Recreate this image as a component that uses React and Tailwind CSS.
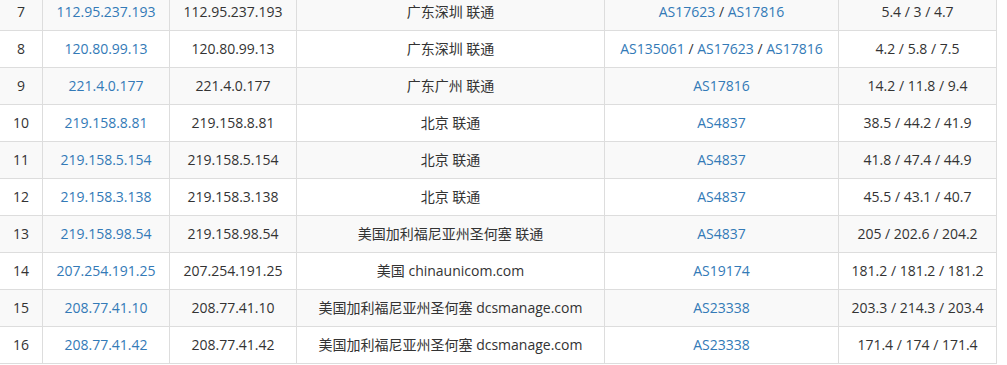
import React from 'react';

const rows = [
    ['7', '112.95.237.193', '广东深圳 联通', ['AS17623', 'AS17816'], '5.4 / 3 / 4.7'],
    ['8', '120.80.99.13', '广东深圳 联通', ['AS135061', 'AS17623', 'AS17816'], '4.2 / 5.8 / 7.5'],
    ['9', '221.4.0.177', '广东广州 联通', ['AS17816'], '14.2 / 11.8 / 9.4'],
    ['10', '219.158.8.81', '北京 联通', ['AS4837'], '38.5 / 44.2 / 41.9'],
    ['11', '219.158.5.154', '北京 联通', ['AS4837'], '41.8 / 47.4 / 44.9'],
    ['12', '219.158.3.138', '北京 联通', ['AS4837'], '45.5 / 43.1 / 40.7'],
    ['13', '219.158.98.54', '美国加利福尼亚州圣何塞 联通', ['AS4837'], '205 / 202.6 / 204.2'],
    ['14', '207.254.191.25', '美国 chinaunicom.com', ['AS19174'], '181.2 / 181.2 / 181.2'],
    ['15', '208.77.41.10', '美国加利福尼亚州圣何塞 dcsmanage.com', ['AS23338'], '203.3 / 214.3 / 203.4'],
    ['16', '208.77.41.42', '美国加利福尼亚州圣何塞 dcsmanage.com', ['AS23338'], '171.4 / 174 / 171.4'],
];

const cell = 'border border-[#ddd] px-2 py-2 text-center leading-5 whitespace-nowrap';

export default function App() {
    return (
        <div className="w-[1007px] h-[365px] overflow-hidden bg-white">
            <table
                className="table-fixed border-collapse w-[997px] -ml-px -mt-[7px] text-[14px] text-[#333]"
                style={{ fontFamily: '"Open Sans", "Noto Sans CJK SC", sans-serif' }}
            >
                <colgroup>
                    <col className="w-[43px]" />
                    <col className="w-[127px]" />
                    <col className="w-[127px]" />
                    <col className="w-[308px]" />
                    <col className="w-[234px]" />
                    <col className="w-[158px]" />
                </colgroup>
                <tbody>
                    {rows.map(([hop, ip, loc, asns, lat], i) => (
                        <tr key={hop} className={i % 2 === 0 ? 'bg-[#f9f9f9]' : 'bg-white'}>
                            <td className={cell}>{hop}</td>
                            <td className={`${cell} text-[#337ab7]`}>{ip}</td>
                            <td className={cell}>{ip}</td>
                            <td className={cell}>{loc}</td>
                            <td className={cell}>
                                {asns.map((a, j) => (
                                    <React.Fragment key={a}>
                                        {j > 0 && ' / '}
                                        <span className="text-[#337ab7]">{a}</span>
                                    </React.Fragment>
                                ))}
                            </td>
                            <td className={cell}>{lat}</td>
                        </tr>
                    ))}
                </tbody>
            </table>
        </div>
    );
}
